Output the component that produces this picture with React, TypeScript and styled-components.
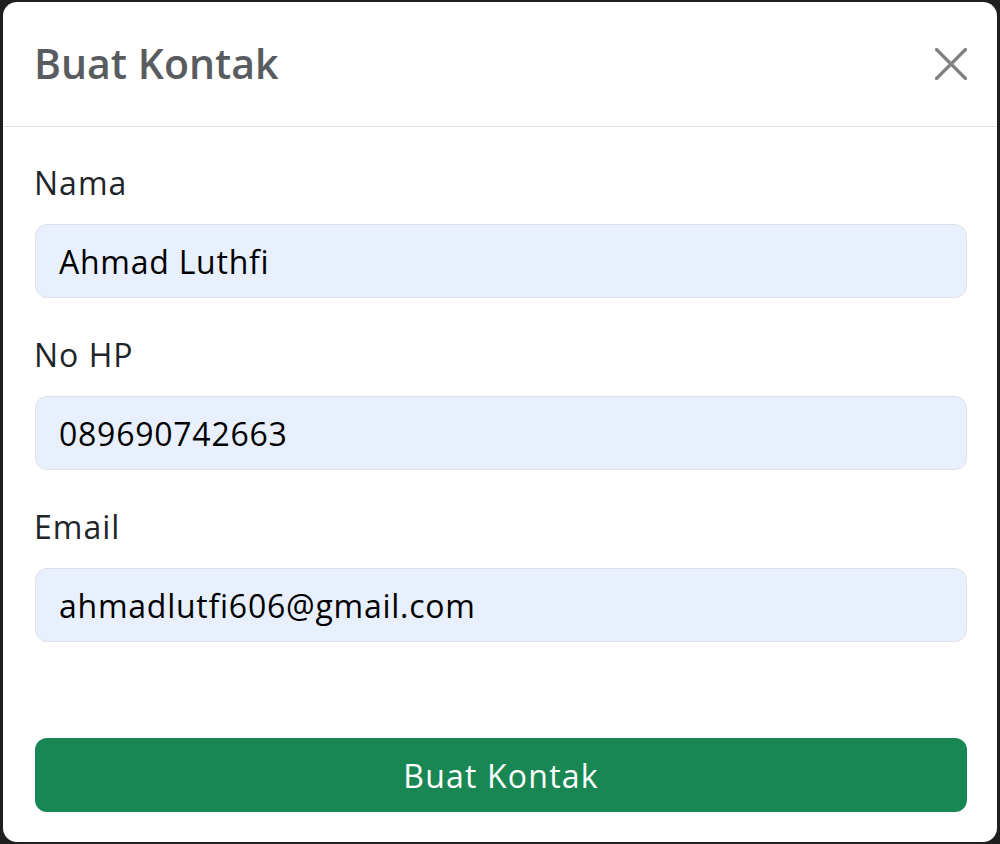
import React from "react";
import styled, { createGlobalStyle } from "styled-components";

const Global = createGlobalStyle`
  html, body { margin: 0; padding: 0; background: #1f1f1f; }
  body { font-family: "Open Sans", "DejaVu Sans", sans-serif; }
  * { box-sizing: border-box; }
`;

const Backdrop = styled.div`
  width: 1000px;
  height: 844px;
  padding: 2px 3px 2px 3px;
  background: #1f1f1f;
`;

const Modal = styled.div`
  width: 994px;
  height: 840px;
  background: #ffffff;
  border-radius: 14px;
  display: flex;
  flex-direction: column;
  overflow: hidden;
`;

const Header = styled.div`
  height: 125px;
  flex: none;
  padding: 0 30px 0 31px;
  display: flex;
  align-items: center;
  justify-content: space-between;
  border-bottom: 1px solid #dee2e6;
`;

const Title = styled.h1`
  margin: 0;
  font-size: 41px;
  font-weight: 600;
  color: #595c5f;
  line-height: 1.2;
`;

const CloseButton = styled.button`
  width: 32px;
  height: 32px;
  padding: 0;
  border: 0;
  background: transparent;
  display: flex;
  align-items: center;
  justify-content: center;
  cursor: pointer;
`;

const Form = styled.form`
  flex: 1;
  display: flex;
  flex-direction: column;
  padding: 32px 30px 30px 32px;
`;

const Field = styled.div`
  display: flex;
  flex-direction: column;
  margin-bottom: 33px;
`;

const Label = styled.label`
  font-size: 32px;
  line-height: 48px;
  letter-spacing: 1px;
  color: #212529;
  margin-bottom: 17px;
  margin-left: -1px;
`;

const Input = styled.input`
  height: 74px;
  width: 100%;
  padding: 0 23px;
  font-family: inherit;
  font-size: 32px;
  letter-spacing: 0.75px;
  color: #000;
  background: #e8f0fe;
  border: 1.5px solid #dee2e6;
  border-radius: 12px;
  outline: none;
`;

const Spacer = styled.div`
  flex: 1;
`;

const Submit = styled.button`
  height: 74px;
  width: 100%;
  border: 0;
  border-radius: 12px;
  background: #198754;
  color: #ffffff;
  font-family: inherit;
  font-size: 32px;
  letter-spacing: 1.2px;
  font-weight: 500;
  cursor: pointer;
`;

const fields = [
  { id: "nama", label: "Nama", value: "Ahmad Luthfi", type: "text" },
  { id: "nohp", label: "No HP", value: "089690742663", type: "text" },
  { id: "email", label: "Email", value: "ahmadlutfi606@gmail.com", type: "email" },
];

export default function App() {
  return (
    <>
      <Global />
      <Backdrop>
        <Modal>
          <Header>
            <Title>Buat Kontak</Title>
            <CloseButton type="button" aria-label="Close">
              <svg width="32" height="32" viewBox="0 0 32 32">
                <path d="M1.5 1.5 L30.5 30.5 M30.5 1.5 L1.5 30.5" stroke="#808080" strokeWidth="3.2" strokeLinecap="round" />
              </svg>
            </CloseButton>
          </Header>
          <Form onSubmit={(e) => e.preventDefault()}>
            {fields.map((f) => (
              <Field key={f.id}>
                <Label htmlFor={f.id}>{f.label}</Label>
                <Input id={f.id} type={f.type} defaultValue={f.value} />
              </Field>
            ))}
            <Spacer />
            <Submit type="submit">Buat Kontak</Submit>
          </Form>
        </Modal>
      </Backdrop>
    </>
  );
}
